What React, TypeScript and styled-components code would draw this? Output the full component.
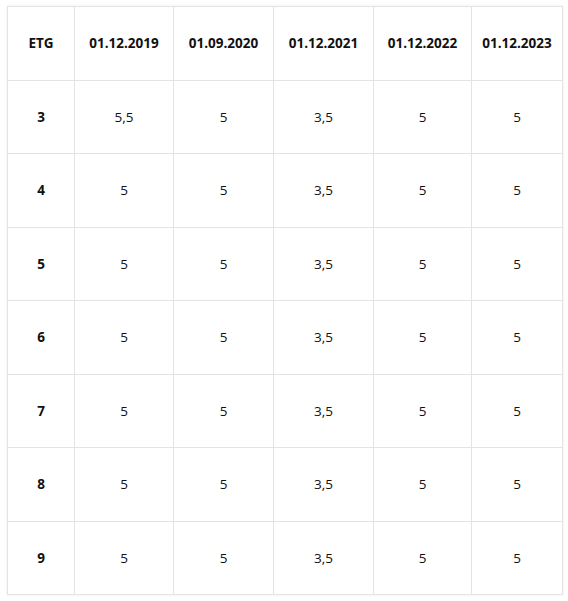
import React from 'react';
import styled, { createGlobalStyle } from 'styled-components';

const GlobalStyle = createGlobalStyle`
  body {
    margin: 0;
    background: #ffffff;
    font-family: "Open Sans", "Liberation Sans", sans-serif;
    color: #111111;
  }
`;

const Page = styled.div`
  padding: 6px 6px 6px 7px;
`;

const Table = styled.table`
  border-collapse: collapse;
  table-layout: fixed;
  width: 555px;
  box-shadow: 0 0 3px rgba(0, 0, 0, 0.08);
  border: 1px solid #e3e3e3;
  font-size: 13.5px;
`;

const Row = styled.tr`
  height: 73.5px;
`;

const Cell = styled.td<{ $bold?: boolean }>`
  border: 1px solid #e3e3e3;
  text-align: center;
  vertical-align: middle;
  padding: 0;
  font-weight: ${({ $bold }) => ($bold ? 700 : 400)};
`;

const HeadCell = styled.th`
  border: 1px solid #e3e3e3;
  text-align: center;
  vertical-align: middle;
  padding: 0;
  font-weight: 700;
`;

const widths = [67, 99, 100, 100, 98, 91];
const dates = ['01.12.2019', '01.09.2020', '01.12.2021', '01.12.2022', '01.12.2023'];

const rows = [
  ['3', '5,5', '5', '3,5', '5', '5'],
  ['4', '5', '5', '3,5', '5', '5'],
  ['5', '5', '5', '3,5', '5', '5'],
  ['6', '5', '5', '3,5', '5', '5'],
  ['7', '5', '5', '3,5', '5', '5'],
  ['8', '5', '5', '3,5', '5', '5'],
  ['9', '5', '5', '3,5', '5', '5'],
];

const App: React.FC = () => {
  return (
    <Page>
      <GlobalStyle />
      <Table>
        <colgroup>
          {widths.map((w, i) => (
            <col key={i} style={{ width: w }} />
          ))}
        </colgroup>
        <thead>
          <Row>
            <HeadCell>ETG</HeadCell>
            {dates.map((d) => (
              <HeadCell key={d}>{d}</HeadCell>
            ))}
          </Row>
        </thead>
        <tbody>
          {rows.map((r) => (
            <Row key={r[0]}>
              {r.map((v, i) => (
                <Cell key={i} $bold={i === 0}>
                  {v}
                </Cell>
              ))}
            </Row>
          ))}
        </tbody>
      </Table>
    </Page>
  );
};

export default App;
